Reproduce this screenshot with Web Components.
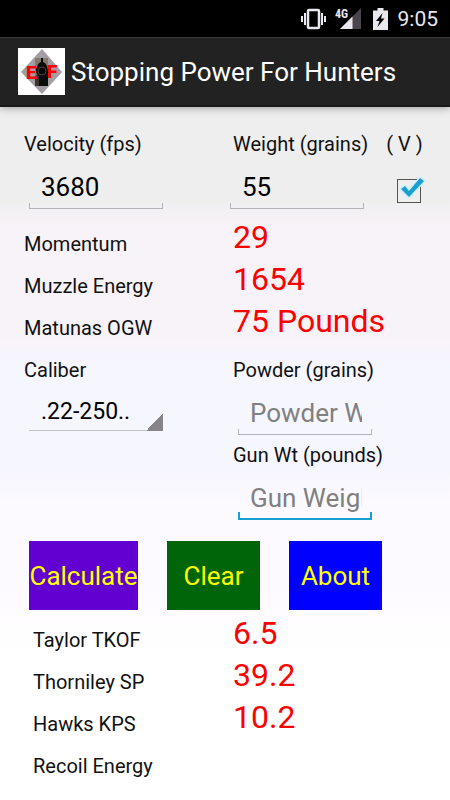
<!DOCTYPE html>
<html lang="en">
<head>
<meta charset="utf-8">
<meta name="viewport" content="width=device-width, initial-scale=1">
<title>Stopping Power For Hunters</title>
<style>
  body {
    margin: 0;
    font-family: Roboto, "Liberation Sans", sans-serif;
    color: #111;
  }
</style>
</head>
<body>
<hunter-app></hunter-app>

<script>
(function() {
  function makeTemplate(html) {
    const tmpl = document.createElement("template");
    tmpl.innerHTML = html;
    return tmpl;
  }

  class BaseElement extends HTMLElement {
    constructor() {
      super();
      this._shadowRoot = this.attachShadow({mode: "open"});
      this._shadowRoot.appendChild(this.constructor.tmpl.content.cloneNode(true));
    }
  }

  // Android status bar
  class StatusBar extends BaseElement {
    static tmpl = makeTemplate(`
    <style>
      :host {
        display: flex;
        align-items: center;
        justify-content: flex-end;
        height: 37px;
        padding-right: 12px;
        background: #000;
        color: #e8e8ee;
      }
      svg { display: block; }
      .vibrate { margin-right: 8px; }
      .signal { margin-right: 12px; }
      .battery { margin-right: 10px; }
      time { font-size: 21px; line-height: 24px; }
    </style>
    <svg class="vibrate" width="27" height="22" viewBox="0 0 27 22">
      <rect x="8" y="2" width="11" height="18" rx="1" fill="none" stroke="#e8e8ee" stroke-width="2.500"/>
      <path d="M5 5v12M22 5v12" stroke="#e8e8ee" stroke-width="2"/>
      <path d="M2 8v6M25 8v6" stroke="#e8e8ee" stroke-width="2"/>
    </svg>
    <svg class="signal" width="26" height="22" viewBox="0 0 26 22">
      <path d="M26 0V21H5z" fill="#4b464e"/>
      <path d="M17.500 8.500V21H5z" fill="#e8e8ee"/>
      <text x="0" y="10" font-size="12" font-weight="700" fill="#e8e8ee" font-family="'Roboto Condensed', Roboto, sans-serif">4G</text>
    </svg>
    <svg class="battery" width="15" height="22" viewBox="0 0 15 22">
      <path d="M4.500 0h6v2.500H15V22H0V2.500h4.500z" fill="#e8e8ee"/>
      <path d="M9.500 5L3 13h3.500L4.500 19l7-8.500H8z" fill="#000"/>
    </svg>
    <time>9:05</time>
    `);
  }

  class AppBar extends BaseElement {
    static tmpl = makeTemplate(`
    <style>
      :host {
        display: flex;
        align-items: center;
        gap: 6px;
        box-sizing: border-box;
        height: 70px;
        padding-left: 18px;
        background: #222;
        border-top: 1px solid #39393b;
        border-bottom: 2px solid #19191a;
        box-shadow: 0 1px 8px rgba(0, 0, 0, .35);
        position: relative;
        color: #fff;
      }
      h1 {
        margin: 0;
        font-size: 26px;
        font-weight: 400;
        line-height: 32px;
        white-space: nowrap;
      }
      svg { flex: none; }
    </style>
    <svg width="47" height="47" viewBox="0 0 47 47">
      <path d="M0 0h47v47H0z" fill="#fff"/>
      <path d="M24 1L44 24 24 46 3 24z" fill="#a39ea4"/>
      <path d="M17 10h13v28H17z" fill="#85796c"/>
      <path d="M17 28l4-2v12h-4z" fill="#3c342d"/>
      <path d="M23 10h2v4l2 1 2 3 1 5v15h-9V28l-3-3v-5l3-5 2-1z" fill="#0b0b0b"/>
      <circle cx="24" cy="23" r="4" fill="#050505" stroke="#4a4038"/>
      <g fill="#f00" font-family="Roboto, sans-serif" font-weight="900" font-size="19">
        <text x="8" y="31">E</text>
        <text x="29" y="30">F</text>
      </g>
    </svg>
    <h1><slot></slot></h1>
    `);
  }

  // label with an underlined text box
  class TextField extends BaseElement {
    static tmpl = makeTemplate(`
    <style>
      :host { display: block; --line: #b4b2b6; }
      :host([active]) { --line: #169fd0; }
      label {
        display: block;
        padding-left: var(--label-indent, 0);
        font-size: 20px;
        line-height: 28px;
        white-space: nowrap;
      }
      input {
        display: block;
        box-sizing: border-box;
        width: 134px;
        height: 51px;
        margin: 0 0 0 var(--field-indent, 0);
        padding: 7px 10px 0 12px;
        border: 0;
        outline: 0;
        color: #000;
        font: 26px Roboto, "Liberation Sans", sans-serif;
        background:
          linear-gradient(var(--line), var(--line)) left bottom / 1px 6px no-repeat,
          linear-gradient(var(--line), var(--line)) right bottom / 1px 6px no-repeat,
          linear-gradient(var(--line), var(--line)) left bottom / 100% 1px no-repeat;
      }
      :host([active]) input { background-size: 2px 8px, 2px 8px, 100% 2px; }
      input::placeholder { color: #808080; opacity: 1; }
    </style>
    <label for="box"></label>
    <input id="box" type="text" inputmode="decimal">
    `);

    connectedCallback() {
      const box = this._shadowRoot.getElementById("box");
      this._shadowRoot.querySelector("label").textContent = this.getAttribute("label");
      box.value = this.getAttribute("value") || "";
      box.placeholder = this.getAttribute("placeholder") || "";
    }

    get value() {
      return this._shadowRoot.getElementById("box").value;
    }

    set value(newValue) {
      this._shadowRoot.getElementById("box").value = newValue;
    }
  }

  class SpinnerField extends BaseElement {
    static tmpl = makeTemplate(`
    <style>
      :host { display: block; }
      label { display: block; font-size: 20px; line-height: 28px; }
      select {
        display: block;
        box-sizing: border-box;
        width: 134px;
        height: 47px;
        margin: 0 0 0 var(--field-indent, 0);
        padding: 7px 12px 0;
        border: 0;
        border-radius: 0;
        outline: 0;
        appearance: none;
        color: #000;
        font: 23px Roboto, "Liberation Sans", sans-serif;
        background:
          linear-gradient(135deg, transparent 50%, #868488 50%) right bottom / 17px 17px no-repeat,
          linear-gradient(#c4c2c6, #c4c2c6) left bottom / 100% 1px no-repeat;
      }
    </style>
    <label for="list"></label>
    <select id="list"></select>
    `);

    connectedCallback() {
      const list = this._shadowRoot.getElementById("list");
      this._shadowRoot.querySelector("label").textContent = this.getAttribute("label");
      list.add(new Option(this.getAttribute("value")));
    }
  }

  class CheckField extends BaseElement {
    static tmpl = makeTemplate(`
    <style>
      :host { display: block; }
      label { display: block; font-size: 20px; line-height: 28px; white-space: nowrap; }
      .box { display: grid; width: 30px; margin: 17px 0 0 10px; }
      input, svg { grid-area: 1 / 1; }
      input {
        box-sizing: border-box;
        width: 24px;
        height: 24px;
        margin: 4px 0 0 1px;
        appearance: none;
        border: 1px solid #555;
      }
      svg { pointer-events: none; }
      input:not(:checked) + svg { visibility: hidden; }
    </style>
    <label for="tick"><slot></slot></label>
    <div class="box">
      <input id="tick" type="checkbox" checked>
      <svg width="30" height="28" viewBox="0 0 30 28">
        <path d="M5 14l4-3 4 5L24 3l4 3L13 22z" fill="none" stroke="#cfeefa" stroke-width="3" stroke-linejoin="round"/>
        <path d="M5 14l4-3 4 5L24 3l4 3L13 22z" fill="#1a9fd2"/>
      </svg>
    </div>
    `);
  }

  // caption on the left, big red number on the right
  class ResultRow extends BaseElement {
    static tmpl = makeTemplate(`
    <style>
      :host {
        display: grid;
        grid-template-columns: 1fr 1fr;
        height: 42px;
      }
      span {
        align-self: end;
        padding-left: var(--caption-indent, 0);
        font-size: 20px;
        line-height: 28px;
      }
      output {
        padding-left: 3px;
        font-size: 32px;
        line-height: 42px;
        color: #f00;
        white-space: nowrap;
      }
    </style>
    <span id="caption"></span>
    <output aria-labelledby="caption"><slot></slot></output>
    `);

    connectedCallback() {
      this._shadowRoot.getElementById("caption").textContent = this.getAttribute("label");
    }
  }

  class ColorButton extends BaseElement {
    static tmpl = makeTemplate(`
    <style>
      :host { display: block; }
      button {
        display: block;
        width: 100%;
        height: 69px;
        padding: 0;
        border: 0;
        background: var(--fill);
        color: #ff0;
        font: 26px Roboto, "Liberation Sans", sans-serif;
      }
    </style>
    <button type="button"><slot></slot></button>
    `);
  }

  class HunterApp extends BaseElement {
    static tmpl = makeTemplate(`
    <style>
      :host {
        display: flex;
        flex-direction: column;
        min-height: 100vh;
      }
      main {
        flex: 1;
        padding: 23px 14px 20px 24px;
        background: linear-gradient(#eee 0, #eee 90px, #f7f3f8 120px, #f7f3f8 225px,
          #f6f6ff 260px, #f6f6ff 360px, #fdfaff 400px, #fdfaff 480px, #fff 550px);
      }
      .inputs {
        display: grid;
        grid-template-columns: 1fr 1fr;
      }
      .first { margin-bottom: 7px; }
      .second { margin: 14px 0 21px; }
      .left { --field-indent: 5px; }
      .right { --label-indent: 3px; }
      .weight { display: flex; gap: 18px; }
      .stack {
        display: flex;
        flex-direction: column;
        gap: 6px;
        --field-indent: 8px;
      }
      .buttons { display: flex; gap: 29px; padding-left: 5px; }
      .buttons color-button { width: 93px; }
      .buttons .wide { width: 109px; }
      .lower { margin-top: 2px; --caption-indent: 9px; }
    </style>
    <status-bar></status-bar>
    <app-bar>Stopping Power For Hunters</app-bar>
    <main>
      <div class="inputs first">
        <text-field class="left" label="Velocity (fps)" value="3680"></text-field>
        <div class="right weight">
          <text-field label="Weight (grains)" value="55"></text-field>
          <check-field>( V )</check-field>
        </div>
      </div>
      <result-row label="Momentum">29</result-row>
      <result-row label="Muzzle Energy">1654</result-row>
      <result-row label="Matunas OGW">75 Pounds</result-row>
      <div class="inputs second">
        <spinner-field class="left" label="Caliber" value=".22-250.."></spinner-field>
        <div class="right stack">
          <text-field label="Powder (grains)" placeholder="Powder Weight"></text-field>
          <text-field label="Gun Wt (pounds)" placeholder="Gun Weight" active></text-field>
        </div>
      </div>
      <div class="buttons">
        <color-button class="wide" style="--fill: #6200d2">Calculate</color-button>
        <color-button style="--fill: #006408">Clear</color-button>
        <color-button style="--fill: #00f">About</color-button>
      </div>
      <div class="lower">
        <result-row label="Taylor TKOF">6.5</result-row>
        <result-row label="Thorniley SP">39.2</result-row>
        <result-row label="Hawks KPS">10.2</result-row>
        <result-row label="Recoil Energy"></result-row>
      </div>
    </main>
    `);
  }

  customElements.define("status-bar", StatusBar);
  customElements.define("app-bar", AppBar);
  customElements.define("text-field", TextField);
  customElements.define("spinner-field", SpinnerField);
  customElements.define("check-field", CheckField);
  customElements.define("result-row", ResultRow);
  customElements.define("color-button", ColorButton);
  customElements.define("hunter-app", HunterApp);
})();
</script>
</body>
</html>
